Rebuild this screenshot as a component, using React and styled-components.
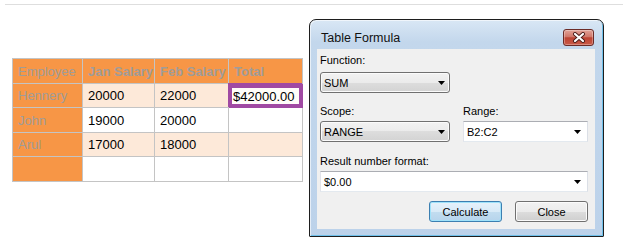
import React from 'react';
import styled, { createGlobalStyle } from 'styled-components';

const Global = createGlobalStyle`
  html, body { margin: 0; padding: 0; background: #fff; }
  body {
    font-family: "Liberation Sans", Arial, sans-serif;
    width: 623px; height: 246px; overflow: hidden;
  }
`;

const Page = styled.div`
  padding-top: 4px;
`;

const Rule = styled.div`
  margin-left: 5px;
  height: 1px;
  background: #dedede;
`;

const Stage = styled.div`
  display: flex;
  align-items: flex-start;
  gap: 6px;
  padding: 14px 0 0 12px;
`;

/* ---------- spreadsheet table ---------- */

const Sheet = styled.div`
  margin-top: 39px;
  display: grid;
  grid-template-columns: 70px 72px 74px 74px;
  grid-template-rows: 25px 24px 25px 24px 25px;
  border-left: 1px solid #c4c4c4;
  border-top: 1px solid #c4c4c4;
  font-size: 13px;
`;

const bgFor = {
  head: '#f79646',
  label: '#f79646',
  band: '#fde9d9',
  plain: '#ffffff',
  selected: '#a04aa3',
};

const Cell = styled.div`
  display: flex;
  align-items: center;
  box-sizing: border-box;
  padding: ${p => (p.$kind === 'selected' ? '4px 3px 3px 3px' : '0 5px')};
  border-right: 1px solid ${p => (p.$kind === 'selected' ? '#a04aa3' : '#c4c4c4')};
  border-bottom: 1px solid ${p => (p.$kind === 'selected' ? '#a04aa3' : '#c4c4c4')};
  box-shadow: ${p => (p.$kind === 'selected' ? '-1px -1px 0 #a04aa3' : 'none')};
  background: ${p => bgFor[p.$kind]};
  color: ${p => (p.$kind === 'head' || p.$kind === 'label' ? '#a09c99' : '#000')};
  font-weight: ${p => (p.$bold ? 700 : 400)};
  white-space: nowrap;
  overflow: hidden;
`;

const Highlight = styled.span`
  display: flex;
  align-items: center;
  width: 100%;
  height: 100%;
  background: #fffdf9;
  padding: 0 1px;
  box-sizing: border-box;
`;

/* ---------- dialog window ---------- */

const Window = styled.div`
  width: 295px;
  height: 218px;
  box-sizing: border-box;
  border: 1px solid #1e1e1e;
  border-radius: 7px 7px 1px 1px;
  background: linear-gradient(#d9e7f5 0px, #c3d7ec 22px, #bcd2ea 100%);
  box-shadow: inset 1px 1px 0 rgba(255, 255, 255, 0.6), inset -1px -1px 0 #6fc0ea;
  display: flex;
  flex-direction: column;
  padding: 0 8px 7px 7px;
`;

const TitleBar = styled.div`
  height: 29px;
  box-sizing: border-box;
  display: flex;
  align-items: center;
  justify-content: space-between;
  padding: 9px 1px 3px 4px;
`;

const Title = styled.span`
  font-size: 12.5px;
  color: #111;
`;

const CloseButton = styled.div`
  width: 31px;
  height: 17px;
  box-sizing: border-box;
  border: 1px solid #6b2b27;
  border-radius: 3px;
  background: linear-gradient(#e2a297 0%, #d0776a 45%, #bd4333 52%, #c85a48 100%);
  box-shadow: inset 0 0 0 1px rgba(255, 255, 255, 0.3);
  display: flex;
  align-items: center;
  justify-content: center;
`;

const Body = styled.div`
  flex: 1;
  background: #f0f0f0;
  display: grid;
  grid-template-columns: 143px 125px;
  align-content: start;
  padding: 5px 7px 0 3px;
  font-size: 11px;
  color: #000;
`;

const Label = styled.div`
  grid-column: ${p => (p.$wide ? '1 / -1' : 'auto')};
  line-height: 13px;
  height: 13px;
  margin-top: ${p => p.$mt || 0}px;
`;

const DropList = styled.div`
  width: 130px;
  height: 21px;
  box-sizing: border-box;
  margin-top: ${p => p.$mt || 0}px;
  border: 1px solid #707070;
  border-radius: 3px;
  background: linear-gradient(#f2f2f2 0%, #ebebeb 50%, #dddddd 50%, #d3d3d3 100%);
  box-shadow: inset 0 0 0 1px #fbfbfb;
  display: flex;
  align-items: center;
  justify-content: space-between;
  padding: 0 4px 0 3px;
`;

const Combo = styled.div`
  grid-column: ${p => (p.$wide ? '1 / -1' : 'auto')};
  height: 21px;
  box-sizing: border-box;
  margin-top: ${p => p.$mt || 0}px;
  border: 1px solid;
  border-color: #abadb3 #dbdfe6 #e3e9ef #e2e3ea;
  background: #fff;
  display: flex;
  align-items: center;
  justify-content: space-between;
  padding: 0 6px 0 3px;
`;

const ButtonRow = styled.div`
  grid-column: 1 / -1;
  margin-top: 9px;
  display: flex;
  justify-content: flex-end;
  gap: 13px;
`;

const Button = styled.div`
  width: 73px;
  height: 21px;
  box-sizing: border-box;
  border: 1px solid ${p => (p.$focused ? '#3c7fb1' : '#707070')};
  border-radius: 3px;
  background: ${p =>
    p.$focused
      ? 'linear-gradient(#e6f2fb 0%, #d8eaf7 50%, #c3ddf0 50%, #b6d4ec 100%)'
      : 'linear-gradient(#f2f2f2 0%, #ebebeb 50%, #dddddd 50%, #cfcfcf 100%)'};
  box-shadow: inset 0 0 0 1px ${p => (p.$focused ? '#9fe2fa' : '#fbfbfb')};
  display: flex;
  align-items: center;
  justify-content: center;
  font-size: 11px;
`;

const Arrow = () => (
  <svg width="7" height="4" viewBox="0 0 7 4">
    <polygon points="0,0 7,0 3.5,4" fill="#000" />
  </svg>
);

const CloseGlyph = () => (
  <svg width="14" height="11" viewBox="0 0 14 11">
    <path d="M3 2 L11 9 M11 2 L3 9" stroke="#4a1c19" strokeWidth="4" strokeLinecap="round" fill="none" />
    <path d="M3 2 L11 9 M11 2 L3 9" stroke="#ffffff" strokeWidth="2.2" strokeLinecap="round" fill="none" />
  </svg>
);

const rows = [
  [
    { t: 'Employee', k: 'head' },
    { t: 'Jan Salary', k: 'head', b: true },
    { t: 'Feb Salary', k: 'head', b: true },
    { t: 'Total', k: 'head', b: true },
  ],
  [
    { t: 'Hennery', k: 'label' },
    { t: '20000', k: 'band' },
    { t: '22000', k: 'band' },
    { t: '$42000.00', k: 'selected' },
  ],
  [
    { t: 'John', k: 'label' },
    { t: '19000', k: 'plain' },
    { t: '20000', k: 'plain' },
    { t: '', k: 'plain' },
  ],
  [
    { t: 'Arul', k: 'label' },
    { t: '17000', k: 'band' },
    { t: '18000', k: 'band' },
    { t: '', k: 'band' },
  ],
  [
    { t: '', k: 'label' },
    { t: '', k: 'plain' },
    { t: '', k: 'plain' },
    { t: '', k: 'plain' },
  ],
];

export default function App() {
  return (
    <Page>
      <Global />
      <Rule />
      <Stage>
        <Sheet>
          {rows.flat().map((c, i) => (
            <Cell key={i} $kind={c.k} $bold={c.b}>
              {c.k === 'selected' ? <Highlight>{c.t}</Highlight> : c.t}
            </Cell>
          ))}
        </Sheet>
        <Window>
          <TitleBar>
            <Title>Table Formula</Title>
            <CloseButton>
              <CloseGlyph />
            </CloseButton>
          </TitleBar>
          <Body>
            <Label $wide>Function:</Label>
            <DropList $mt={5}>
              <span>SUM</span>
              <Arrow />
            </DropList>
            <div />
            <Label $mt={12}>Scope:</Label>
            <Label $mt={12}>Range:</Label>
            <DropList $mt={3}>
              <span>RANGE</span>
              <Arrow />
            </DropList>
            <Combo $mt={3}>
              <span>B2:C2</span>
              <Arrow />
            </Combo>
            <Label $wide $mt={13}>Result number format:</Label>
            <Combo $wide $mt={3}>
              <span>$0.00</span>
              <Arrow />
            </Combo>
            <ButtonRow>
              <Button $focused>Calculate</Button>
              <Button>Close</Button>
            </ButtonRow>
          </Body>
        </Window>
      </Stage>
    </Page>
  );
}
